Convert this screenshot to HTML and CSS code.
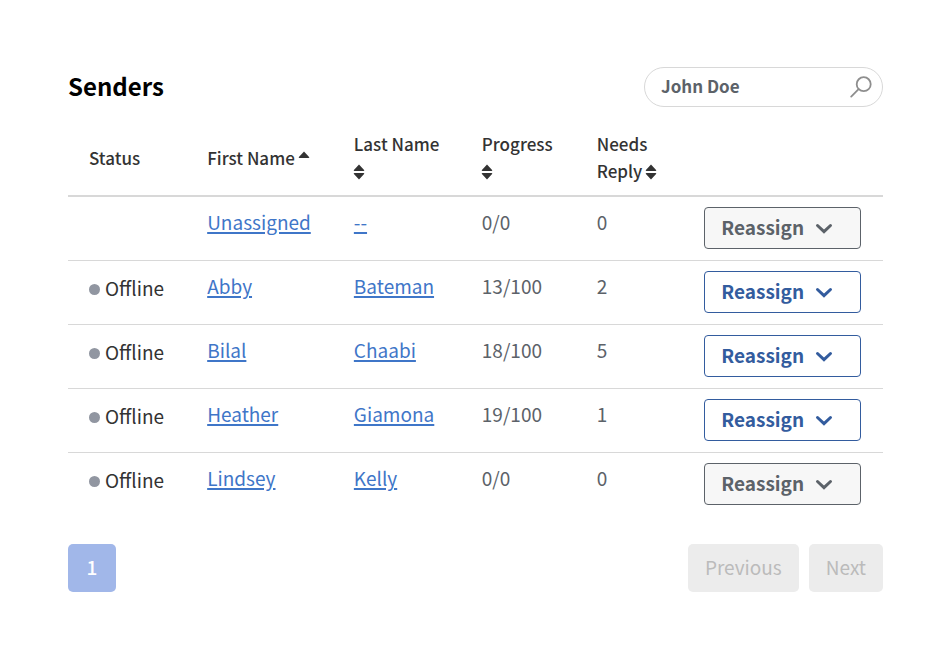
FILE: index.html
```html
<!DOCTYPE html>
<html lang="en">
<head>
    <meta charset="UTF-8">
    <meta name="viewport" content="width=device-width, initial-scale=1.0">
    <title>Senders</title>
    <link rel="stylesheet" href="styles.css">
</head>
<body>
    <!-- shared icons -->
    <svg class="icon-defs" aria-hidden="true">
        <symbol id="icon-sort" viewBox="0 0 12 16">
            <path d="M6 0.5 11.3 6.2Q11.3 7 10.5 7H1.5Q0.7 7 0.7 6.2ZM6 15.5 11.3 9.8Q11.3 9 10.5 9H1.5Q0.7 9 0.7 9.8Z"/>
        </symbol>
        <symbol id="icon-sort-up" viewBox="0 0 12 16">
            <path d="M6 0.5 11.3 6.2Q11.3 7 10.5 7H1.5Q0.7 7 0.7 6.2Z"/>
        </symbol>
        <symbol id="icon-chevron" viewBox="0 0 18 12">
            <path d="M2.5 2.5 9 8.7 15.5 2.5" fill="none" stroke="currentColor" stroke-width="3" stroke-linecap="round"/>
        </symbol>
    </svg>

    <main class="senders">
        <div class="toolbar">
            <h1>Senders</h1>
            <form class="search" role="search">
                <input type="text" id="search" name="search" placeholder="John Doe" aria-label="Search senders">
                <button type="submit" class="search-button" aria-label="Search">
                    <svg width="22" height="22" viewBox="0 0 22 22" fill="none" stroke="currentColor" stroke-width="1.8" stroke-linecap="round">
                        <circle cx="13.7" cy="8.2" r="7"/>
                        <path d="M8.6 13.2 1.2 20.6"/>
                    </svg>
                </button>
            </form>
        </div>

        <table>
            <thead>
                <tr>
                    <th class="col-status">Status</th>
                    <th class="col-first">First Name <svg class="sort"><use href="#icon-sort-up"/></svg></th>
                    <th class="col-last">Last Name <svg class="sort"><use href="#icon-sort"/></svg></th>
                    <th class="col-progress">Progress <svg class="sort"><use href="#icon-sort"/></svg></th>
                    <th class="col-reply">Needs Reply <svg class="sort"><use href="#icon-sort"/></svg></th>
                    <th></th>
                </tr>
            </thead>
            <tbody>
                <tr>
                    <td></td>
                    <td><a href="#">Unassigned</a></td>
                    <td><a href="#">--</a></td>
                    <td>0/0</td>
                    <td>0</td>
                    <td><button type="button" class="reassign muted" aria-haspopup="true">Reassign <svg class="chevron"><use href="#icon-chevron"/></svg></button></td>
                </tr>
                <tr>
                    <td class="status"><span class="dot"></span>Offline</td>
                    <td><a href="#">Abby</a></td>
                    <td><a href="#">Bateman</a></td>
                    <td>13/100</td>
                    <td>2</td>
                    <td><button type="button" class="reassign" aria-haspopup="true">Reassign <svg class="chevron"><use href="#icon-chevron"/></svg></button></td>
                </tr>
                <tr>
                    <td class="status"><span class="dot"></span>Offline</td>
                    <td><a href="#">Bilal</a></td>
                    <td><a href="#">Chaabi</a></td>
                    <td>18/100</td>
                    <td>5</td>
                    <td><button type="button" class="reassign" aria-haspopup="true">Reassign <svg class="chevron"><use href="#icon-chevron"/></svg></button></td>
                </tr>
                <tr>
                    <td class="status"><span class="dot"></span>Offline</td>
                    <td><a href="#">Heather</a></td>
                    <td><a href="#">Giamona</a></td>
                    <td>19/100</td>
                    <td>1</td>
                    <td><button type="button" class="reassign" aria-haspopup="true">Reassign <svg class="chevron"><use href="#icon-chevron"/></svg></button></td>
                </tr>
                <tr>
                    <td class="status"><span class="dot"></span>Offline</td>
                    <td><a href="#">Lindsey</a></td>
                    <td><a href="#">Kelly</a></td>
                    <td>0/0</td>
                    <td>0</td>
                    <td><button type="button" class="reassign muted" aria-haspopup="true">Reassign <svg class="chevron"><use href="#icon-chevron"/></svg></button></td>
                </tr>
            </tbody>
        </table>

        <nav class="pagination" aria-label="Pages">
            <button type="button" class="page current" aria-current="page">1</button>
            <button type="button" class="page" disabled>Previous</button>
            <button type="button" class="page" disabled>Next</button>
        </nav>
    </main>
</body>
</html>
```

FILE: styles.css
```css
* {
    box-sizing: border-box;
}
body {
    margin: 0;
    padding: 67px 67px 60px 68px;
    background-color: #fff;
    color: #333;
    font-family: "Noto Sans CJK SC", sans-serif;
    font-size: 19px;
    line-height: 30px;
}
button,
input {
    font: inherit;
}
.icon-defs {
    display: none;
}

/* heading and search */
.toolbar {
    display: flex;
    justify-content: space-between;
    align-items: flex-start;
    margin-bottom: 14px;
}
h1 {
    margin: 0;
    color: #000;
    font-size: 24px;
    font-weight: 700;
    line-height: 38px;
}
.search {
    display: flex;
    align-items: center;
    width: 239px;
    height: 40px;
    padding: 0 10px 0 16px;
    border: 1px solid #d8d8d8;
    border-radius: 20px;
}
.search input {
    flex: 1;
    min-width: 0;
    padding: 0 0 2px;
    border: none;
    outline: none;
    background: none;
    color: #5c6269;
    font-size: 17px;
    font-weight: 700;
}
.search input::placeholder {
    color: #5c6269;
    opacity: 1;
}
.search-button {
    display: flex;
    padding: 0;
    border: none;
    background: none;
    color: #8e8e8e;
    cursor: pointer;
}

/* table */
table {
    width: 100%;
    table-layout: fixed;
    border-spacing: 0;
}
th,
td {
    padding: 10px 21px;
    text-align: left;
}
th {
    padding: 9px 10px 11px 21px;
    border-bottom: 2px solid #d8d8d8;
    font-size: 17px;
    font-weight: 500;
    line-height: 27px;
}
td {
    height: 64px;
    border-bottom: 1px solid #d8d8d8;
    color: #5c6269;
    vertical-align: top;
}
td:last-child {
    padding-right: 22px;
}
tbody tr:last-child td {
    border-bottom: none;
}
.col-status {
    width: 14.5%;
}
.col-first {
    width: 18%;
}
.col-last {
    width: 15.7%;
}
.col-progress {
    width: 14.1%;
}
.col-reply {
    width: 13.2%;
}
.sort {
    width: 12px;
    height: 16px;
    margin-left: -1px;
    fill: #333;
    vertical-align: -2px;
}
td.status {
    color: #333;
    line-height: 34px;
    white-space: nowrap;
}
.dot {
    display: inline-block;
    width: 11px;
    height: 11px;
    margin-right: 5px;
    border-radius: 50%;
    background-color: #9196a1;
    vertical-align: 1px;
}
a {
    color: #3f76c8;
    text-decoration: underline;
    text-decoration-thickness: 2px;
    text-underline-offset: 2px;
}
.reassign {
    display: flex;
    align-items: center;
    gap: 11px;
    width: 100%;
    height: 42px;
    padding: 0 16px 2px;
    border: 1px solid #335c9e;
    border-radius: 4px;
    background-color: #fff;
    color: #335c9e;
    font-weight: 700;
    cursor: pointer;
}
.reassign.muted {
    border-color: #5c6269;
    background-color: #f7f7f7;
    color: #5c6269;
}
.chevron {
    width: 18px;
    height: 12px;
    margin-top: 3px;
}

/* pagination */
.pagination {
    display: flex;
    gap: 10px;
    margin-top: 27px;
}
.page {
    height: 48px;
    padding: 0 17px 2px;
    border: none;
    border-radius: 5px;
    background-color: #ececec;
    color: #bbb;
}
.page.current {
    width: 48px;
    margin-right: auto;
    background-color: #a1b7e9;
    color: #fff;
    font-weight: 500;
}
```
